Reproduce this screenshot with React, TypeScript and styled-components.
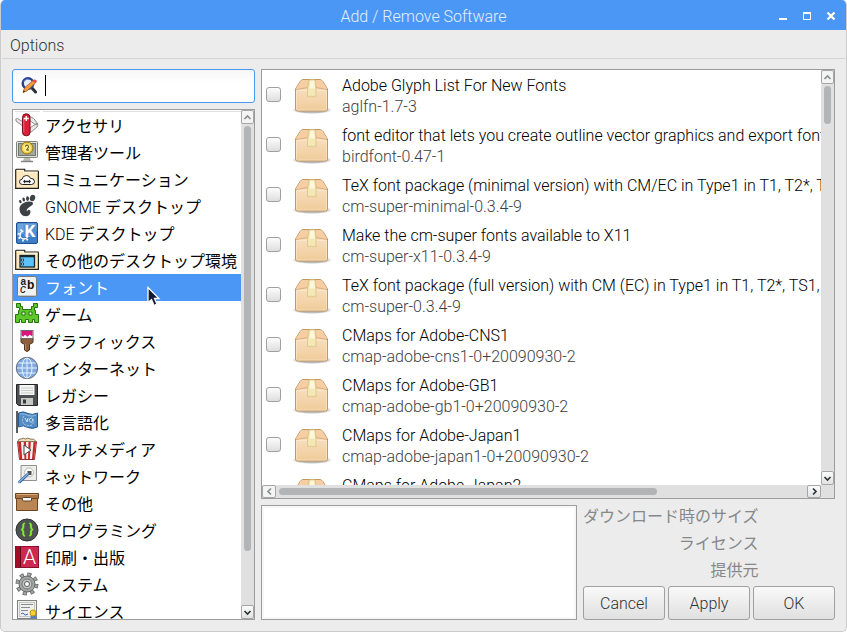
import React, { useState } from "react";
import styled, { createGlobalStyle, css } from "styled-components";

const GlobalStyle = createGlobalStyle`
  * { box-sizing: border-box; }
  body {
    margin: 0;
    background: #fff;
    color: #1c1c1c;
    font: 300 16px/21px Roboto, "Noto Sans CJK JP", sans-serif;
  }
  button, input, textarea { font: inherit; color: inherit; margin: 0; }
`;

/* ---------- window frame ---------- */

const Window = styled.div`
  display: flex;
  flex-direction: column;
  height: 100vh;
  background: #ececec;
  border: 1px solid #cbcbcb;
  border-top: 0;
  border-radius: 5px;
  overflow: hidden;
`;

const TitleBar = styled.header`
  display: grid;
  grid-template-columns: 1fr auto 1fr;
  align-items: center;
  height: 30px;
  flex: none;
  margin: 0 -1px;
  padding: 2px 8px 0;
  background: #4b97f5;
`;

const Title = styled.h1`
  grid-column: 2;
  margin: 0;
  font-size: 16px;
  font-weight: 300;
  color: #e4effe;
`;

const WindowButtons = styled.div`
  display: flex;
  justify-content: flex-end;
  gap: 8px;
`;

const WindowButton = styled.button`
  display: flex;
  width: 16px;
  height: 16px;
  padding: 0;
  border: 0;
  background: none;
`;

const MenuBar = styled.nav`
  display: flex;
  flex: none;
  height: 29px;
  margin: 0 1px;
  padding: 0 8px;
  border-bottom: 1px solid #d3d3d3;
`;

const MenuButton = styled.button`
  padding: 2px 0 0;
  border: 0;
  background: none;
  color: #2e3436;
`;

const Body = styled.main`
  display: grid;
  grid-template-columns: 243px minmax(0, 1fr);
  grid-template-rows: minmax(0, 1fr);
  gap: 6px;
  flex: 1;
  min-height: 0;
  padding: 10px 11px 11px;
`;

const Column = styled.div`
  display: flex;
  flex-direction: column;
  gap: 6px;
  min-height: 0;
`;

/* ---------- search ---------- */

const SearchBox = styled.label`
  display: flex;
  align-items: center;
  flex: none;
  height: 34px;
  padding: 0 8px 2px;
  border: 1px solid #4b97f5;
  border-radius: 3px;
  background: linear-gradient(#f6f6f6, #fff 40%);
`;

const Caret = styled.span`
  width: 1px;
  height: 21px;
  margin-left: 8px;
  background: #000;
`;

const SearchInput = styled.input`
  flex: 1;
  min-width: 0;
  padding: 0;
  border: 0;
  outline: 0;
  background: none;
  caret-color: transparent;
`;

/* ---------- scrolling panes ---------- */

const Pane = styled.section`
  display: grid;
  grid-template-columns: minmax(0, 1fr) 13px;
  grid-template-rows: minmax(0, 1fr) auto;
  flex: 1;
  min-height: 0;
  border: 1px solid #9c9c9c;
  background: #e0e0e0;
`;

const Viewport = styled.div`
  overflow: hidden;
  background: #fff;
`;

const Bar = styled.div<{ $horizontal?: boolean }>`
  display: flex;
  flex-direction: ${(p) => (p.$horizontal ? "row" : "column")};
  background: #e0e0e0;
`;

const Track = styled.div<{ $horizontal?: boolean }>`
  flex: 1;
  min-width: 0;
  min-height: 0;
  padding: ${(p) => (p.$horizontal ? "3px" : "2px 3px")};
`;

const Thumb = styled.div<{ $horizontal?: boolean; $size: number }>`
  border-radius: 4px;
  background: #b2b4b6;
  ${(p) =>
    p.$horizontal
      ? css`width: ${p.$size}%; height: 7px;`
      : css`width: 7px; height: ${p.$size}%;`}
`;

const Stepper = styled.button<{ $horizontal?: boolean }>`
  display: flex;
  align-items: center;
  justify-content: center;
  flex: none;
  width: ${(p) => (p.$horizontal ? 14 : 13)}px;
  height: ${(p) => (p.$horizontal ? 13 : 14)}px;
  padding: 0;
  border: 1px solid #a6a6a6;
  border-radius: 2px;
  background: linear-gradient(#fbfbfb, #e2e2e2);
  color: #2e3436;
  &:disabled {
    background: #f4f4f4;
    color: #8b8e8f;
  }
`;

const arrows = {
  up: "M1.5 6 4.5 3 7.5 6",
  down: "M1.5 3 4.5 6 7.5 3",
  left: "M6 1.5 3 4.5 6 7.5",
  right: "M3 1.5 6 4.5 3 7.5",
};

function Arrow({ dir }: { dir: keyof typeof arrows }) {
  return (
    <svg width="9" height="9" fill="none" stroke="currentColor" strokeWidth="1.7">
      <path d={arrows[dir]} />
    </svg>
  );
}

function ScrollBar({ size, horizontal }: { size: number; horizontal?: boolean }) {
  return (
    <Bar $horizontal={horizontal}>
      <Stepper $horizontal={horizontal} disabled aria-label="Scroll back">
        <Arrow dir={horizontal ? "left" : "up"} />
      </Stepper>
      <Track $horizontal={horizontal}>
        <Thumb $horizontal={horizontal} $size={size} />
      </Track>
      <Stepper $horizontal={horizontal} aria-label="Scroll forward">
        <Arrow dir={horizontal ? "right" : "down"} />
      </Stepper>
    </Bar>
  );
}

/* ---------- categories ---------- */

const CategoryPane = styled(Pane)`
  grid-template-rows: minmax(0, 1fr);
`;

const CategoryList = styled.ul`
  margin: 0;
  padding: 0;
  list-style: none;
  &::before {
    content: "";
    display: block;
    height: 1px;
    margin: 1px 0 0 2px;
    background: linear-gradient(90deg, #dedede 25px, #fff 25px, #fff 28px, #dedede 28px);
  }
`;

const CategoryItem = styled.li`
  position: relative;
`;

const CategoryButton = styled.button<{ $selected: boolean }>`
  display: flex;
  align-items: flex-start;
  gap: 6px;
  width: 100%;
  height: 27px;
  padding: 1px 2px 0;
  border: 0;
  background: ${(p) => (p.$selected ? "#4b97f5" : "transparent")};
  color: ${(p) => (p.$selected ? "#fff" : "#000")};
  line-height: 28px;
  white-space: nowrap;
  text-align: left;
`;

const Kana = styled.span`
  font-weight: 400;
`;

const CategorySvg = styled.svg`
  flex: none;
  width: 24px;
  height: 24px;
`;

const Pointer = styled.svg`
  position: absolute;
  left: 133px;
  top: 12px;
  z-index: 1;
  pointer-events: none;
`;

/* ---------- packages ---------- */

const PackageList = styled.ul`
  margin: 0;
  padding: 0;
  list-style: none;
`;

const PackageRow = styled.li`
  display: flex;
  align-items: center;
  height: 50px;
  padding: 0 0 2px 4px;
`;

const Check = styled.input`
  appearance: none;
  flex: none;
  width: 15px;
  height: 15px;
  border: 1px solid #a0a0a0;
  border-radius: 3px;
  background: linear-gradient(#fcfcfc, #dedede);
  &:checked { background: #4b97f5; }
`;

const PackageLabel = styled.label`
  display: flex;
  align-items: flex-end;
  gap: 10px;
  margin-left: 11px;
  white-space: nowrap;
`;

const PackageText = styled.span`
  display: flex;
  flex-direction: column;
  padding-top: 4px;
  color: #000;
`;

const Version = styled.span`
  color: #3c3f41;
`;

/* ---------- details and actions ---------- */

const Footer = styled.div`
  display: grid;
  grid-template-columns: minmax(0, 1fr) auto;
  gap: 6px;
  flex: none;
`;

const Description = styled.textarea`
  width: 100%;
  height: 100%;
  border: 1px solid #9c9c9c;
  box-shadow: inset 0 0 0 2px #f7f7f7;
  background: #fff;
  resize: none;
  outline: 0;
`;

const Side = styled.div`
  display: flex;
  flex-direction: column;
  gap: 3px;
`;

const Facts = styled.dl`
  display: grid;
  grid-template-columns: auto 1fr;
  row-gap: 3px;
  margin: 0;
`;

const FactName = styled.dt`
  color: #85888a;
  font-weight: 400;
  line-height: 24px;
  text-align: right;
`;

const FactValue = styled.dd`
  margin: 0;
`;

const Actions = styled.div`
  display: grid;
  grid-template-columns: repeat(3, 82px);
  gap: 3px;
`;

const ActionButton = styled.button`
  height: 34px;
  padding: 0;
  border: 1px solid #a0a0a0;
  border-radius: 3px;
  background: linear-gradient(#f9f9f9, #e0e0e0);
  color: #2e3436;
`;

/* ---------- drawings ---------- */

const Folder = () => (
  <>
    <path d="M.7 21.3V3.2q0-.8.8-.8h8.200V4h13q.7 0 .7.8v16.500z" fill="#fbe9bd" stroke="#23211c" strokeWidth="1.2" />
    <path d="M1.6 3.300h7v2h13.900" fill="none" stroke="#fff8e4" />
  </>
);

const icons: Record<string, React.ReactNode> = {
  accessories: (
    <>
      <path d="M9 14 1 8q-1-3 1.500-2.500L9 9.500zM15 15l7-5q2 2 0 4l-7 6zM14 3q5 1 9 8l-2 1-7-5z" fill="#e8e8e6" stroke="#8b8d8b" />
      <rect x="7.500" y=".8" width="7.500" height="22" rx="3.600" fill="#dc1f38" stroke="#7c0b1b" />
      <path d="M8.800 5v14" stroke="#f26a78" />
      <path d="M11.300 3v5M8.800 5.500h5" stroke="#fff" strokeWidth="1.500" />
    </>
  ),
  admin: (
    <>
      <rect x="1.500" y="1.500" width="21" height="16" rx="1" fill="#e0e2de" stroke="#80827e" />
      <rect x="3.500" y="3.500" width="17" height="12" fill="#a3a8a2" stroke="#73786f" />
      <path d="M9 18h6l1 3H8z" fill="#b9bbb7" />
      <path d="M6 21.500h12" stroke="#858783" strokeWidth="1.500" />
      <circle cx="12" cy="8" r="6" fill="#eecb42" stroke="#8f7819" />
      <circle cx="12" cy="8" r="4" fill="#fae98e" />
      <path d="M10.500 6.500q0-1.500 1.500-1.500t1.500 1.500q0 1.500-2 3.500h2.500" fill="none" stroke="#4b3c05" />
    </>
  ),
  communication: (
    <>
      <Folder />
      <path d="M7.500 17.500q-3 0-3-2.700 0-2.300 2.500-2.500.6-3.800 4.500-3.800 3 0 4 2.900 3.800-.4 4 3 .1 3.100-3.200 3.100z" fill="#fff" stroke="#222" />
      <path d="M9 14.500h6" stroke="#222" strokeWidth="1.300" />
      <path d="m10 12.500-2 2 2 2zM14 12.500l2 2-2 2z" fill="#222" />
    </>
  ),
  gnome: (
    <g fill="#3c4143">
      <ellipse cx="17.500" cy="4" rx="2.600" ry="3.300" transform="rotate(22 17.500 4)" />
      <ellipse cx="12.500" cy="4.600" rx="1.500" ry="2.400" />
      <ellipse cx="8.800" cy="5.500" rx="1.300" ry="2" transform="rotate(-12 8.800 6)" />
      <ellipse cx="5.500" cy="7.500" rx="1.200" ry="1.700" transform="rotate(-20 5.800 8)" />
      <path d="M17.500 8.300q-3.500-1.500-8 .2-5 2-5.100 6.500Q5 22 10.500 22.300q4.500 0 5-4.200.2-2.200-1.700-2.400-1.500 0-1.800 1.700-1-1.400.6-3 1.800-1.400 4-2.800 2.300-1.500.900-3.300z" />
    </g>
  ),
  kde: (
    <>
      <rect x="1.500" y="1.500" width="21" height="21" rx="1.500" fill="#3c7dc5" stroke="#1e4f92" />
      <path d="M2.500 2.500h19v8q-9 0-19 5z" fill="#6ea5dd" />
      <circle cx="9" cy="14" r="4" fill="none" stroke="#fff" strokeWidth="1.500" />
      <circle cx="9" cy="14" r="5.500" fill="none" stroke="#fff" strokeWidth="2" strokeDasharray="1.600 2.720" />
      <path d="M8.500 4H21v11.500H8.500z" fill="#5590d2" />
      <text x="9.500" y="16" fontFamily="Roboto" fontWeight="700" fontSize="17" fill="#fff">K</text>
    </>
  ),
  desktops: (
    <>
      <Folder />
      <rect x="5" y="7.500" width="14.500" height="11.500" fill="#5ac4fa" stroke="#16262e" strokeWidth="1.300" />
      <path d="M5 8.500h14.500" stroke="#16262e" strokeWidth="1.500" />
      <path d="M6.500 11h2v2h-2zM6.500 15h2v2h-2z" fill="#fff" stroke="#16262e" strokeWidth=".8" />
    </>
  ),
  fonts: (
    <>
      <rect x="2.500" y="1.500" width="19" height="20" rx="2" fill="#f1f1ef" stroke="#777" />
      <path d="M3.500 20.500h17" stroke="#c8c8c6" />
      <text x="5.500" y="9.500" fontFamily="Liberation Sans" fontWeight="700" fontSize="10" fill="#222">a</text>
      <text x="12" y="14" fontFamily="Liberation Sans" fontWeight="700" fontSize="12" fill="#111">b</text>
      <text x="5" y="18" fontFamily="Liberation Sans" fontStyle="italic" fontSize="12" fill="#222">c</text>
    </>
  ),
  games: (
    <path
      d="M1.500 1.500h4v3h2v3h9v-3h2v-3h4v4h-3v3h1v4h3v8h-4v-3h-2v3h-4v-3h-3v3h-4v-3h-2v3H.500v-8h3v-4h1v-3h-3zM7 10v3h3v-3zM14 10v3h3v-3z"
      fill="#5ec82b"
      fillRule="evenodd"
      stroke="#26720f"
    />
  ),
  graphics: (
    <>
      <path d="M6 9h12v4q0 1-2 1.500l-1.500 1V21q-2.500 3-5 0v-5.500L8 14.500Q6 14 6 13z" fill="#8d5f3c" stroke="#4e321c" />
      <path d="M10.500 15v6" stroke="#bd8c62" />
      <rect x="6" y="1.500" width="12" height="8" fill="#fff" stroke="#6b6b6b" />
      <path d="M6.500 2h11v4q-1 2-2 0-1-1-2 1-1 1.500-2 0t-2-1q-1 3-3 0z" fill="#dc157f" />
    </>
  ),
  internet: (
    <>
      <circle cx="12" cy="12" r="10.700" fill="#7fa9df" stroke="#666b75" />
      <g fill="none" stroke="#eaf3ff">
        <ellipse cx="12" cy="12" rx="5" ry="10" />
        <path d="M12 2v20M2 12h20M3.500 7h17M3.500 17h17" />
      </g>
    </>
  ),
  legacy: (
    <>
      <path d="M1.500 1.500h21v21h-19l-2-2z" fill="#4c5052" stroke="#242627" />
      <rect x="4.500" y="2" width="15" height="10" fill="#f5f6f4" />
      <path d="M6 5h12M6 7.500h12M6 10h12" stroke="#c7cac5" />
      <rect x="6" y="15" width="12" height="7" fill="#c6c9c3" />
      <rect x="8" y="16.500" width="3" height="4" fill="#383b3d" />
    </>
  ),
  locale: (
    <>
      <path d="M2 1v22" stroke="#5a5e60" strokeWidth="2" />
      <path d="M3.500 3q5-2.500 9.500.5 4 2 9.500-.5v14q-5 2.500-9.500.5-4.500-3-9.500-.5z" fill="#538bc4" stroke="#265c94" />
      <path d="M5 4q4-1 8 1.500 4 1.500 8-.5" fill="none" stroke="#90bbe1" />
      <path d="M9 6q-3 5 0 8 3.500 3 8 1 3-4 1-7" fill="none" stroke="#a8cbea" strokeDasharray="2 1" />
      <path d="m10 8 2 4 1-4M14.500 9q2-2 3 0 .5 4-2 3-2-1-1-3z" fill="none" stroke="#c9e0f3" />
    </>
  ),
  multimedia: (
    <>
      <path d="m2.500 4.500 2 18h15l2-18z" fill="#f8eeeb" stroke="#8d302d" />
      <path d="M3 5h3l1.200 17H5zM8.700 5h2.300l.3 17H9.500zM13.500 5h2.300L14.800 22H13zM18.500 5H21l-2 17h-2z" fill="#c8252c" />
      <path d="M3 4.500q0-3 3-2.500 2-1.700 4.500 0 2.500-1.800 4.500 0 4.600-.6 6 2.500z" fill="#f2dfb5" stroke="#89745b" />
      <path d="m9 8 7 5-7 5z" fill="#fff" stroke="#444" />
    </>
  ),
  network: (
    <>
      <path d="M6 1.500h15.500v15H6z" fill="#edeeec" stroke="#8f918e" />
      <circle cx="14" cy="8.500" r="4.500" fill="#fff" stroke="#b6b8b5" />
      <rect x="12.500" y="7" width="4" height="4" fill="#4d5154" />
      <path d="m4 18.500 9-8.500" stroke="#315f9b" strokeWidth="3" />
      <path d="m3 19 10.500-9.500" stroke="#87b2e3" strokeWidth="1.300" />
    </>
  ),
  other: (
    <>
      <path d="M1.500 7h21v12.500h-21z" fill="#ba8754" stroke="#694524" />
      <path d="M.5 2.500h23v5H.5z" fill="#aa7544" stroke="#694524" />
      <path d="M1.500 3.500h21" stroke="#d6ab7c" />
      <rect x="7.500" y="6.500" width="9" height="3.500" rx="1" fill="#fff" stroke="#5d4226" />
    </>
  ),
  programming: (
    <>
      <circle cx="12" cy="12" r="11" fill="#4e5251" stroke="#303332" />
      <text x="8" y="16" textAnchor="middle" fontFamily="Roboto" fontWeight="700" fontSize="14" fill="#82ee2c">{"{"}</text>
      <text x="16" y="16" textAnchor="middle" fontFamily="Roboto" fontWeight="700" fontSize="14" fill="#82ee2c">{"}"}</text>
    </>
  ),
  publishing: (
    <>
      <rect x=".5" y="1.500" width="23" height="21" fill="#cd2850" stroke="#8b1130" />
      <path d="M1 2h4v20H1z" fill="#a40d26" />
      <path d="M5.500 2v20" stroke="#5f0817" />
      <text x="14.500" y="19" textAnchor="middle" fontFamily="Roboto" fontSize="21" fill="#fff">A</text>
    </>
  ),
  system: (
    <>
      <circle cx="12" cy="12" r="9.500" fill="none" stroke="#666967" strokeWidth="4" strokeDasharray="4 3.460" />
      <circle cx="12" cy="12" r="9.500" fill="none" stroke="#a3a6a4" strokeWidth="2.500" strokeDasharray="2.500 4.960" strokeDashoffset="-.7" />
      <circle cx="12" cy="12" r="8" fill="#a3a6a4" stroke="#666967" />
      <circle cx="12" cy="12" r="5" fill="#c2c4c2" stroke="#747775" />
      <circle cx="12" cy="12" r="2.500" fill="#fff" stroke="#555856" />
    </>
  ),
  science: (
    <>
      <rect x="2.500" y="1.500" width="19" height="18" fill="#f0f1ef" stroke="#7f827e" />
      <rect x="4.500" y="3.500" width="15" height="14" fill="none" stroke="#c4c6c3" />
      <path d="M6 5.500h12M6 8.500h9M6 11.500h7" stroke="#858b91" />
      <path d="M6 15q2-2 3 0t4 0" fill="none" stroke="#345e9e" />
      <path d="m16 16-1 5 3-2 4 2-1-5z" fill="#4c82c4" />
      <circle cx="18" cy="14" r="3" fill="#f8cf37" stroke="#c6930c" />
    </>
  ),
};

function PackageIcon() {
  return (
    <svg width="40" height="40" aria-hidden="true">
      <defs>
        <linearGradient id="carton" x1="0" y1="0" x2="0" y2="1">
          <stop offset="0" stopColor="#fce6ce" />
          <stop offset="1" stopColor="#efcb98" />
        </linearGradient>
        <radialGradient id="ground">
          <stop offset=".7" stopColor="#777" stopOpacity=".5" />
          <stop offset="1" stopColor="#777" stopOpacity="0" />
        </radialGradient>
      </defs>
      <ellipse cx="20" cy="33" rx="20" ry="4" fill="url(#ground)" />
      <path d="M3.500 12 8 4.500q1-1.500 3-2h17q2 .5 3 2L35.500 12v20q0 2-2 2h-28q-2 0-2-2z" fill="url(#carton)" stroke="#c29762" />
      <path d="M4 11.500 8.500 5q1-1.500 3-2h16q2 .5 3 2l4.500 6.500z" fill="#f7cea4" />
      <path d="m4 12.500 12-2 1-7M35 12.500l-11-2-1-7" fill="none" stroke="#d9ad7e" />
      <path d="M4.500 13.500h30V32q0 1-1 1h-28q-1 0-1-1z" fill="none" stroke="#fbe9d4" strokeOpacity=".6" />
      <path d="M17 3h6l1 9v8l-1.500-1-1.500 1-1.500-1-1.500 1-1.500-1-1 1v-8z" fill="#f3e8b6" stroke="#dbca8c" />
      <path d="M18.500 3.500h3.500l1 8h-5.500z" fill="#fcf7dc" />
    </svg>
  );
}

const SearchIcon = () => (
  <svg width="16" height="17" aria-hidden="true">
    <path d="m11 11 3.500 4" stroke="#2c2f31" strokeWidth="3" strokeLinecap="round" />
    <circle cx="7" cy="6.500" r="5.300" fill="#e5edf8" stroke="#26428f" strokeWidth="2.400" />
    <path d="M3 4.500q1.500-2.500 4-2.500" fill="none" stroke="#7596d5" />
    <path d="m2 15.500 1.500-4.500 8.500-7.500 2.500 2.500-8.500 8z" fill="#f29a3c" stroke="#99511b" strokeWidth=".7" />
    <path d="m11.500 4 1.500-1.500q1.500-.5 2.500 1T14.500 6z" fill="#ea4850" />
    <path d="m2 15.500.7-2.300 1.500 1.500z" fill="#2b241c" />
  </svg>
);

/* ---------- data ---------- */

const categories: { icon: string; latin?: string; name: string }[] = [
  { icon: "accessories", name: "アクセサリ" },
  { icon: "admin", name: "管理者ツール" },
  { icon: "communication", name: "コミュニケーション" },
  { icon: "gnome", latin: "GNOME ", name: "デスクトップ" },
  { icon: "kde", latin: "KDE ", name: "デスクトップ" },
  { icon: "desktops", name: "その他のデスクトップ環境" },
  { icon: "fonts", name: "フォント" },
  { icon: "games", name: "ゲーム" },
  { icon: "graphics", name: "グラフィックス" },
  { icon: "internet", name: "インターネット" },
  { icon: "legacy", name: "レガシー" },
  { icon: "locale", name: "多言語化" },
  { icon: "multimedia", name: "マルチメディア" },
  { icon: "network", name: "ネットワーク" },
  { icon: "other", name: "その他" },
  { icon: "programming", name: "プログラミング" },
  { icon: "publishing", name: "印刷・出版" },
  { icon: "system", name: "システム" },
  { icon: "science", name: "サイエンス" },
];

const packages = [
  ["Adobe Glyph List For New Fonts", "aglfn-1.7-3"],
  ["font editor that lets you create outline vector graphics and export fonts", "birdfont-0.47-1"],
  ["TeX font package (minimal version) with CM/EC in Type1 in T1, T2*, TS1, X2 enc", "cm-super-minimal-0.3.4-9"],
  ["Make the cm-super fonts available to X11", "cm-super-x11-0.3.4-9"],
  ["TeX font package (full version) with CM (EC) in Type1 in T1, T2*, TS1, X2 enc", "cm-super-0.3.4-9"],
  ["CMaps for Adobe-CNS1", "cmap-adobe-cns1-0+20090930-2"],
  ["CMaps for Adobe-GB1", "cmap-adobe-gb1-0+20090930-2"],
  ["CMaps for Adobe-Japan1", "cmap-adobe-japan1-0+20090930-2"],
  ["CMaps for Adobe-Japan2", "cmap-adobe-japan2-0+20090930-2"],
];

const facts = ["ダウンロード時のサイズ", "ライセンス", "提供元"];

export default function App() {
  const [selected, setSelected] = useState("fonts");

  return (
    <>
      <GlobalStyle />
      <Window>
        <TitleBar>
          <Title>Add / Remove Software</Title>
          <WindowButtons>
            <WindowButton aria-label="Minimize">
              <svg width="16" height="16"><path d="M4 10h8v2H4z" fill="#fff" /></svg>
            </WindowButton>
            <WindowButton aria-label="Maximize">
              <svg width="16" height="16"><path d="M4.500 5v6.500h7V5M4 5h8" fill="none" stroke="#fff" /><path d="M4 4h8v2H4z" fill="#fff" /></svg>
            </WindowButton>
            <WindowButton aria-label="Close">
              <svg width="16" height="16"><path d="m4.500 4.500 7 7m0-7-7 7" stroke="#fff" strokeWidth="2.200" /></svg>
            </WindowButton>
          </WindowButtons>
        </TitleBar>
        <MenuBar>
          <MenuButton>Options</MenuButton>
        </MenuBar>
        <Body>
          <Column>
            <SearchBox>
              <SearchIcon />
              <Caret />
              <SearchInput type="text" aria-label="Search" />
            </SearchBox>
            <CategoryPane>
              <Viewport>
                <CategoryList>
                  {categories.map(({ icon, latin, name }) => (
                    <CategoryItem key={icon}>
                      <CategoryButton $selected={icon === selected} onClick={() => setSelected(icon)}>
                        <CategorySvg viewBox="0 0 24 24" aria-hidden="true">{icons[icon]}</CategorySvg>
                        <span>{latin}<Kana>{name}</Kana></span>
                      </CategoryButton>
                      {icon === "fonts" && (
                        <Pointer width="16" height="22" aria-hidden="true">
                          <path d="M2 1.500v15l3.500-3 2.500 6 3-1.300-2.500-5.700h4.500z" fill="#141a36" stroke="#fff" strokeWidth="1.300" />
                        </Pointer>
                      )}
                    </CategoryItem>
                  ))}
                </CategoryList>
              </Viewport>
              <ScrollBar size={89} />
            </CategoryPane>
          </Column>
          <Column>
            <Pane>
              <Viewport>
                <PackageList>
                  {packages.map(([summary, version]) => (
                    <PackageRow key={version}>
                      <Check type="checkbox" id={version} />
                      <PackageLabel htmlFor={version}>
                        <PackageIcon />
                        <PackageText>
                          {summary}
                          <Version>{version}</Version>
                        </PackageText>
                      </PackageLabel>
                    </PackageRow>
                  ))}
                </PackageList>
              </Viewport>
              <ScrollBar size={10} />
              <ScrollBar size={72} horizontal />
            </Pane>
            <Footer>
              <Description aria-label="Description" readOnly />
              <Side>
                <Facts>
                  {facts.map((name) => (
                    <React.Fragment key={name}>
                      <FactName>{name}</FactName>
                      <FactValue />
                    </React.Fragment>
                  ))}
                </Facts>
                <Actions>
                  <ActionButton>Cancel</ActionButton>
                  <ActionButton>Apply</ActionButton>
                  <ActionButton>OK</ActionButton>
                </Actions>
              </Side>
            </Footer>
          </Column>
        </Body>
      </Window>
    </>
  );
}
